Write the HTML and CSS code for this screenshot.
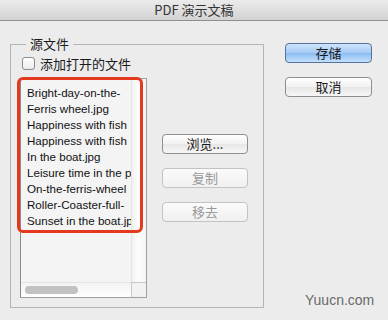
FILE: index.html
```html
<!DOCTYPE html>
<html lang="zh-CN">
<head>
  <meta charset="UTF-8" />
  <title>PDF 演示文稿</title>
  <link rel="stylesheet" href="styles.css">
</head>
<body>
  <div class="titlebar">PDF 演示文稿</div>

  <div class="main">
    <div class="group">
      <span class="group-title">源文件</span>
      <label class="check-row">
        <span class="checkbox"></span>
        <span>添加打开的文件</span>
      </label>
      <div class="group-body">
        <div class="list">
          <ul class="items">
            <li>Bright-day-on-the-</li>
            <li>Ferris wheel.jpg</li>
            <li>Happiness with fish</li>
            <li>Happiness with fish</li>
            <li>In the boat.jpg</li>
            <li>Leisure time in the p</li>
            <li>On-the-ferris-wheel</li>
            <li>Roller-Coaster-full-</li>
            <li>Sunset in the boat.jpg</li>
          </ul>
          <div class="vscroll"></div>
          <div class="hscroll"><span class="thumb"></span></div>
          <div class="corner"></div>
        </div>
        <div class="mid-buttons">
          <button class="btn">浏览...</button>
          <button class="btn" disabled>复制</button>
          <button class="btn" disabled>移去</button>
        </div>
      </div>
    </div>

    <div class="side">
      <button class="btn btn-default">存储</button>
      <button class="btn">取消</button>
    </div>
  </div>

  <!-- red highlight drawn on top of the file list -->
  <div class="highlight"></div>
  <div class="watermark">Yuucn.com</div>
</body>
</html>
```

FILE: styles.css
```css
* {
  margin: 0;
  padding: 0;
  box-sizing: border-box;
}

body {
  width: 388px;
  height: 320px;
  overflow: hidden;
  position: relative;
  background: #ececec;
  font-family: "Noto Sans CJK SC", "Liberation Sans", sans-serif;
  font-size: 13px;
  color: #1a1a1a;
}

.titlebar {
  height: 21px;
  line-height: 20px;
  text-align: center;
  font-size: 13px;
  color: #333;
  background: linear-gradient(#ebebeb, #d3d3d3);
  border-bottom: 1px solid #8f8f8f;
}

.main {
  display: flex;
  padding: 22px 0 0 10px;
}

.group {
  position: relative;
  margin-top: 1px;
  width: 254px;
  height: 264px;
  border: 1px solid #b4b4b4;
  padding: 12px 0 0 9px;
}

.group-title {
  position: absolute;
  top: -10px;
  left: 15px;
  padding: 0 4px;
  background: #ececec;
  line-height: 18px;
}

.check-row {
  display: flex;
  align-items: center;
  gap: 5px;
  margin-left: 2px;
  height: 13px;
  line-height: 13px;
}

.checkbox {
  width: 13px;
  height: 13px;
  border: 1px solid #8c8c8c;
  border-radius: 3px;
  background: linear-gradient(#ffffff, #ececec);
}

.group-body {
  display: flex;
  margin-top: 8px;
}

.list {
  position: relative;
  width: 127px;
  height: 220px;
  border: 1px solid #a0a0a0;
  border-left-color: #8a8a8a;
  background: #f4f4f4;
  overflow: hidden;
}

.items {
  list-style: none;
  padding: 6px 0 0 6px;
  width: 111px;
  overflow: hidden;
  font-family: "Liberation Sans", "Noto Sans", sans-serif;
  font-size: 11.6px;
  line-height: 16px;
  color: #111;
  white-space: nowrap;
}

.vscroll {
  position: absolute;
  top: 0;
  right: 0;
  width: 15px;
  bottom: 15px;
  background: linear-gradient(90deg, #f0f0f0, #fdfdfd 40%, #f6f6f6);
  border-left: 1px solid #e4e4e4;
}

.hscroll {
  position: absolute;
  left: 0;
  right: 15px;
  bottom: 0;
  height: 15px;
  background: linear-gradient(#f3f3f3, #ffffff);
  border-top: 1px solid #e4e4e4;
}

.hscroll .thumb {
  position: absolute;
  left: 4px;
  top: 3px;
  width: 53px;
  height: 8px;
  border-radius: 4px;
  background: #c2c2c2;
}

.corner {
  position: absolute;
  right: 0;
  bottom: 0;
  width: 15px;
  height: 15px;
  background: #f2f2f2;
  border-left: 1px solid #c8c8c8;
  border-top: 1px solid #c8c8c8;
}

.mid-buttons {
  display: flex;
  flex-direction: column;
  gap: 14px;
  margin: 56px 0 0 15px;
}

.btn {
  width: 86px;
  height: 20px;
  border: 1px solid #8e8e8e;
  border-radius: 4px;
  background: linear-gradient(#ffffff, #f1f1f1 50%, #e6e6e6 51%, #f7f7f7);
  font-family: "Noto Sans CJK SC", "Liberation Sans", sans-serif;
  font-size: 13px;
  line-height: 18px;
  color: #1a1a1a;
}

.btn:disabled {
  border-color: #c3c3c3;
  color: #9a9a9a;
  background: linear-gradient(#fbfbfb, #f0f0f0);
}

.side {
  display: flex;
  flex-direction: column;
  gap: 14px;
  margin-left: 21px;
}

.side .btn {
  width: 87px;
}

.btn-default {
  border-color: #56719a;
  background: linear-gradient(#cfe3fb, #a5cbf5 50%, #8bbcf2 51%, #c4e0fc);
}

.highlight {
  position: absolute;
  left: 17px;
  top: 77px;
  width: 126px;
  height: 156px;
  border: 3px solid #e2391f;
  border-radius: 6px;
}

.watermark {
  position: absolute;
  left: 305px;
  top: 292px;
  font-family: "Liberation Sans", sans-serif;
  font-size: 14px;
  color: #6a6a6a;
}
```
